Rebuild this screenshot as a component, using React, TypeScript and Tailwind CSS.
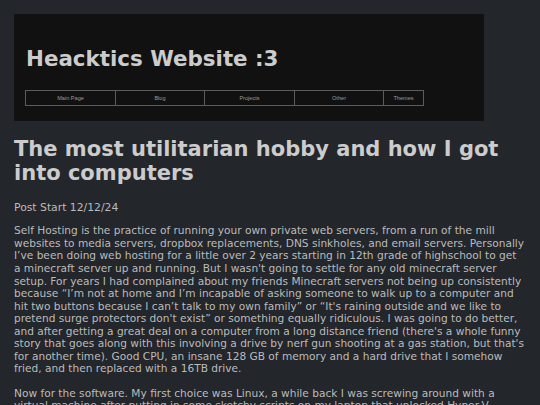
const navItems = [
  { label: 'Main Page', w: 'w-[90px]' },
  { label: 'Blog', w: 'w-[89px]' },
  { label: 'Projects', w: 'w-[90px]' },
  { label: 'Other', w: 'w-[89px]' },
  { label: 'Themes', w: 'w-[40px]' },
]

export default function App() {
  return (
    <div className="min-h-screen overflow-hidden bg-[#23262b] pl-[14px] pt-[14px] font-['DejaVu_Sans',sans-serif]">
      {/* Header */}
      <header className="w-[470px] bg-[#111111] pl-[12px] pt-[33px] pb-[15px]">
        <h1 className="text-[21.4px] font-bold leading-[24px] text-[#cccccc]">Heacktics Website :3</h1>
        <nav className="-ml-px mt-[19px] flex border-l border-[#5c5c5c]">
          {navItems.map((item) => (
            <a
              key={item.label}
              href="#"
              className={`${item.w} flex h-[16px] items-center justify-center border-y border-r border-[#5c5c5c] font-['Liberation_Sans',Arial,sans-serif] text-[5.6px] text-[#9a9a9a]`}
            >
              {item.label}
            </a>
          ))}
        </nav>
      </header>

      {/* Post */}
      <main className="w-[511.5px] text-[#bbbbbb]">
        <h1 className="mt-[16px] w-[513px] text-[21px] font-bold leading-[24.4px] text-[#cccccc]">
          The most utilitarian hobby and how I got into computers
        </h1>
        <p className="mt-[16px] text-[10.8px] leading-[12.55px]">Post Start 12/12/24</p>
        <p className="mt-[10px] text-[10.6px] leading-[12.55px]">
          Self Hosting is the practice of running your own private web servers, from a run of the mill websites to
          media servers, dropbox replacements, DNS sinkholes, and email servers. Personally I’ve been doing web hosting
          for a little over 2 years starting in 12th grade of highschool to get a minecraft server up and running. But
          I wasn't going to settle for any old minecraft server setup. For years I had complained about my friends
          Minecraft servers not being up consistently because “I’m not at home and I’m incapable of asking someone to
          walk up to a computer and hit two buttons because I can’t talk to my own family” or “It's raining outside and
          we like to pretend surge protectors don't exist” or something equally ridiculous. I was going to do better,
          and after getting a great deal on a computer from a long distance friend (there's a whole funny story that
          goes along with this involving a drive by nerf gun shooting at a gas station, but that's for another time).
          Good CPU, an insane 128 GB of memory and a hard drive that I somehow fried, and then replaced with a 16TB
          drive.
        </p>
        <p className="mt-[12px] text-[10.6px] leading-[12.55px]">
          Now for the software. My first choice was Linux, a while back I was screwing around with a virtual machine
          after putting in some sketchy scripts on my laptop that unlocked Hyper-V features, and I figured it would be
          the best way to learn.
        </p>
      </main>
    </div>
  )
}
